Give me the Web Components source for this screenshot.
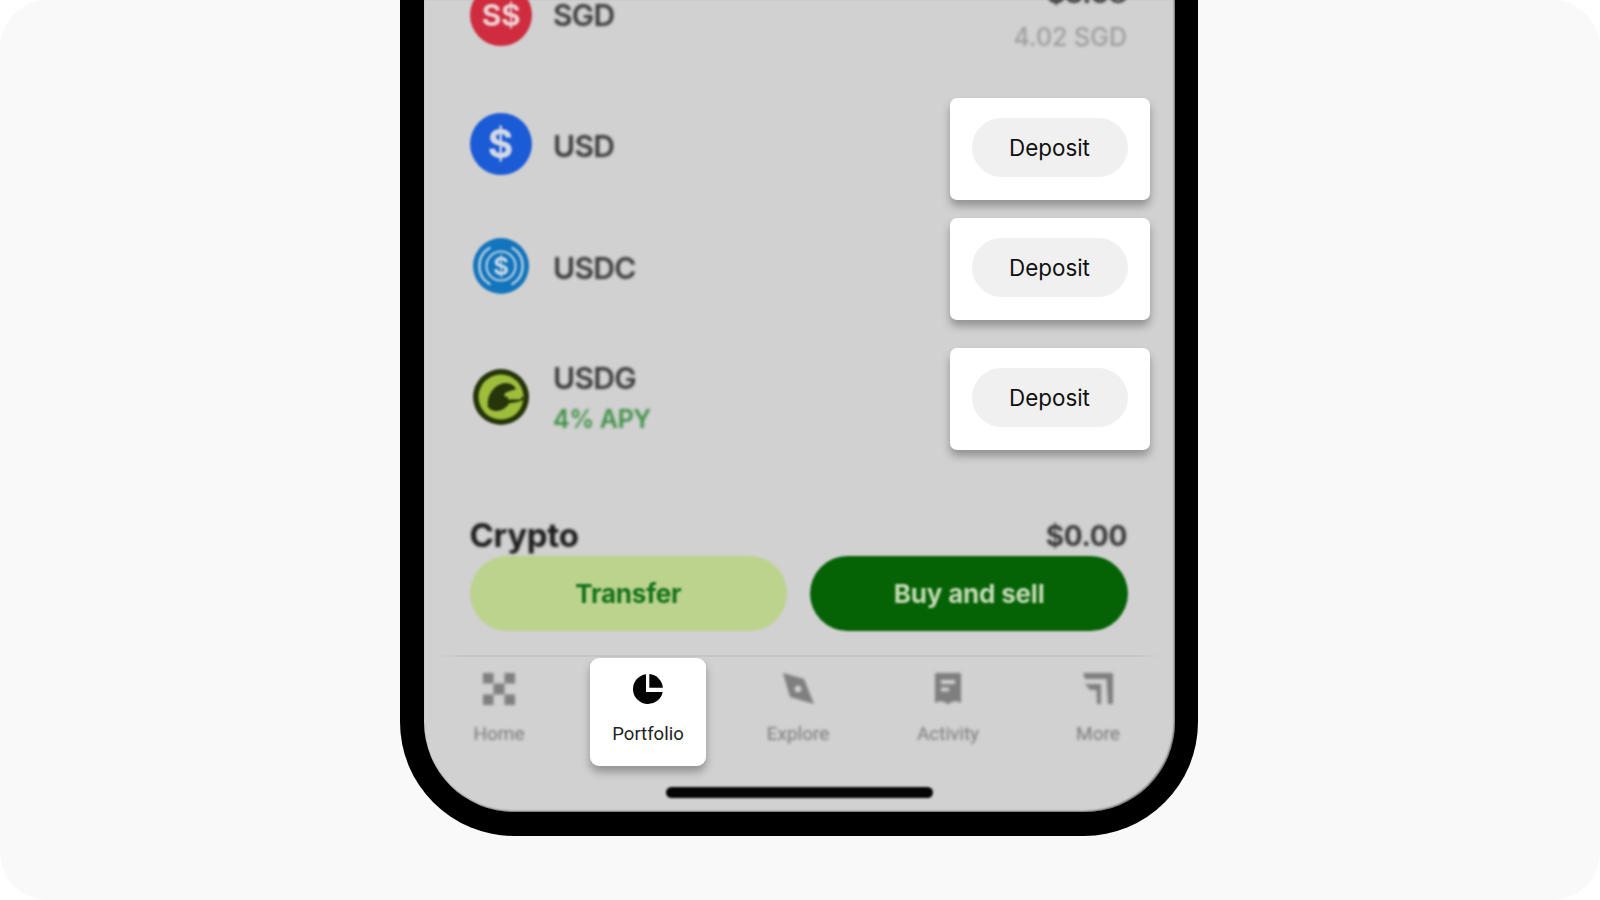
<!DOCTYPE html>
<html><head><meta charset="utf-8">
<style>
html,body{margin:0;padding:0;background:#fff;height:100%;overflow:hidden}
</style></head>
<body>
<demo-page>
  <phone-frame>
    <asset-row name="SGD" value="$3.08" sub="4.02 SGD" icon="sgd"></asset-row>
    <asset-row name="USD" icon="usd" deposit style="--ic:10px;--nm:6px;margin-bottom:18px"></asset-row>
    <asset-row name="USDC" icon="usdc" deposit style="--ic:6px;--nm:3px;margin-bottom:28px"></asset-row>
    <asset-row name="USDG" apy="4% APY" icon="usdg" deposit style="--ic:4px;--nm:2px"></asset-row>
    <section-head label="Crypto" value="$0.00"></section-head>
    <action-bar></action-bar>
    <tab-bar></tab-bar>
  </phone-frame>
</demo-page>
<script>
const BLUR='blur(1.4px)';
function def(name,html){
  customElements.define(name,class extends HTMLElement{
    connectedCallback(){
      if(this.shadowRoot)return;
      const r=this.attachShadow({mode:'open'});
      r.innerHTML=typeof html==='function'?html(this):html;
    }
  });
}
const ICONS={
 sgd:`<svg viewBox="0 0 62 62" width="62" height="62"><circle cx="31" cy="31" r="31" fill="#cf2c3f"/><text x="31" y="42" text-anchor="middle" font-family="Inter,sans-serif" font-weight="700" font-size="30" letter-spacing="-.5" fill="#eccdcf">S$</text></svg>`,
 usd:`<svg viewBox="0 0 62 62" width="62" height="62"><circle cx="31" cy="31" r="31" fill="#1c5bd6"/><text x="30.500" y="45" text-anchor="middle" font-family="Inter,sans-serif" font-weight="700" font-size="39" fill="#d3d9e6">$</text></svg>`,
 usdc:`<svg viewBox="0 0 56 56" width="56" height="56"><circle cx="28" cy="28" r="28" fill="#1375bd"/><g fill="none" stroke="#b4cde0" stroke-width="2.500" stroke-linecap="round"><path d="M16.500 10A21 21 0 0 0 16.500 46"/><path d="M39.500 10A21 21 0 0 1 39.500 46"/></g><text x="28" y="36.500" text-anchor="middle" font-family="Inter,sans-serif" font-weight="700" font-size="24" fill="#c9d9e4">$</text><circle cx="28" cy="28" r="14.500" fill="none" stroke="#b4cde0" stroke-width="2.200"/></svg>`,
 usdg:`<svg viewBox="0 0 56 56" width="56" height="56"><circle cx="28" cy="28" r="28" fill="#26350a"/><circle cx="28" cy="28" r="22.500" fill="#9dbd3b"/><path d="M15 38C13 27 21 15 32 14C37 14 41 16 43 20L34 23C30 25 31 28 34 28H50V31C44 34 41 33 36 34.500C32 42 20 45 15 38Z" fill="#26350a"/><path d="M35 27.500H48V30.500H35Z" fill="#9dbd3b"/></svg>`
};
def('demo-page',`<style>
:host{display:flex;justify-content:center;align-items:flex-end;box-sizing:border-box;width:1600px;height:900px;padding:0 2px 64px 0;background:#f9f9f9;border-radius:48px;overflow:hidden;font-family:Inter,"Liberation Sans",sans-serif}
</style><slot></slot>`);
def('phone-frame',`<style>
:host{display:block;box-sizing:border-box;width:798px;height:836px;padding:0 23px 24px 24px;background:#000;border-radius:0 0 114px 114px}
.screen{height:812px;box-sizing:border-box;background:#d1d1d1;border-radius:0 0 90px 90px;overflow:hidden;display:flex;flex-direction:column;justify-content:flex-end;padding-bottom:14px;box-shadow:inset -1px -1px 2px rgba(0,0,0,.5)}
.bar{width:267px;height:11px;margin:21px auto 0;border-radius:6px;background:#050505;filter:blur(1px);flex:none}
</style><div class="screen"><slot></slot><div class="bar"></div></div>`);
def('asset-row',h=>{
 const n=h.getAttribute('name'),v=h.getAttribute('value'),s=h.getAttribute('sub'),a=h.getAttribute('apy'),ic=h.getAttribute('icon');
 const dep=h.hasAttribute('deposit');
 return `<style>
:host{display:block;flex:none}
.row{display:flex;align-items:center;padding:0 25px 0 45.500px}
.sgd{height:130px;padding-right:48px;margin-bottom:18px}
.dep{height:102px}
.ic{flex:none;display:flex;filter:blur(1.1px);width:62px;justify-content:center;margin-bottom:var(--ic,0)}
.names{flex:1;margin-left:21.500px;margin-bottom:var(--nm,0);filter:${BLUR}}
.n{font-size:30px;font-weight:600;line-height:36px;color:#3a3a3a;letter-spacing:-.7px}
.a{font-size:25px;font-weight:600;line-height:34px;color:#3f9146;margin-top:6px;letter-spacing:-.4px}
.vals{text-align:right;filter:${BLUR}}
.v{font-size:28px;font-weight:700;color:#3a3a3a;line-height:36px;letter-spacing:-.3px}
.s{font-size:25px;font-weight:500;color:#9e9e9e;line-height:36px;margin-top:8px}
.card{flex:none;width:200px;height:102px;box-sizing:border-box;padding-top:20px;background:#fff;border-radius:7px;box-shadow:0 6px 8px rgba(0,0,0,.3)}
.pill{width:156px;height:59px;margin-left:21.500px;border-radius:30px;background:#f0f0f0;display:flex;align-items:center;justify-content:center;font-size:22.400px;font-weight:400;color:#111}
</style><div class="row ${dep?'dep':'sgd'}">
<div class="ic">${ICONS[ic]}</div>
<div class="names"><div class="n">${n}</div>${a?`<div class="a">${a}</div>`:''}</div>
${v?`<div class="vals"><div class="v">${v}</div><div class="s">${s}</div></div>`:''}
${dep?`<div class="card"><div class="pill">Deposit</div></div>`:''}
</div>`;
});
def('section-head',h=>`<style>
:host{display:flex;flex:none;justify-content:space-between;align-items:flex-end;padding:0 48px 0 45.500px;margin-top:48px;height:58px;box-sizing:border-box;filter:${BLUR}}
.l{font-size:33px;font-weight:700;color:#1c1c1c;line-height:42px;letter-spacing:-.3px}
.v{font-size:28px;font-weight:700;color:#3a3a3a;line-height:40px;letter-spacing:-.3px}
</style><div class="l">${h.getAttribute('label')}</div><div class="v">${h.getAttribute('value')}</div>`);
def('action-bar',`<style>
:host{display:flex;flex:none;gap:23px;padding:0 47px 0 45.500px;filter:blur(1.1px)}
.b{flex:1;height:75px;border-radius:38px;display:flex;align-items:center;justify-content:center;font-size:26px;font-weight:700;letter-spacing:-.2px}
.t{background:#bbd38c;color:#15731b}
.s{background:#056306;color:#c4d9b4}
</style><div class="b t">Transfer</div><div class="b s">Buy and sell</div>`);
const TAB={
 home:`<svg viewBox="0 0 32 32" width="32" height="32"><g fill="#7f7f7f"><rect x="0" y="0" width="10.500" height="10.500"/><rect x="21.500" y="0" width="10.500" height="10.500"/><rect x="10.500" y="10.500" width="11" height="11"/><rect x="0" y="21.500" width="10.500" height="10.500"/><rect x="21.500" y="21.500" width="10.500" height="10.500"/></g></svg>`,
 port:`<svg viewBox="0 0 32 32" width="32" height="32"><path d="M14 1.200A15 15 0 1 0 30.700 19H14Z" fill="#050505"/><path d="M17.300 1.100A15 15 0 0 1 30.900 14.700H17.300Z" fill="#050505"/></svg>`,
 expl:`<svg viewBox="0 0 32 32" width="32" height="32"><path fill-rule="evenodd" d="M1 0 22 6 32 31 8 24ZM16 12.500a3.500 3.500 0 1 0 .01 0Z" fill="#7f7f7f"/></svg>`,
 acti:`<svg viewBox="0 0 32 32" width="32" height="32"><path fill-rule="evenodd" d="M3 0H29V30L24 28 19.500 29 16 31.500 12.500 29 8 28 3 30ZM9 7V11H23V7ZM9 14.500V18.500H17V14.500Z" fill="#7f7f7f"/></svg>`,
 more:`<svg viewBox="0 0 32 32" width="32" height="32"><path d="M1 0H31V31H26L24.500 6H3ZM3 11H19V31H15L14.500 17H8Z" fill="#7f7f7f" fill-rule="evenodd"/></svg>`
};
def('tab-bar',`<style>
:host{display:block;flex:none;margin-top:24px}
.line{height:2px;margin:0 12px;background:linear-gradient(90deg,transparent,#c6c6c6 4%,#c6c6c6 96%,transparent)}
.tabs{display:grid;grid-template-columns:repeat(5,150px);margin:1px 0 0 -1px;justify-items:center}
.t{width:116px;height:108px;box-sizing:border-box;padding-top:15px;display:flex;flex-direction:column;align-items:center;font-family:Roboto,sans-serif;font-size:19px;color:#7a7a7a}
.t:first-child{margin-left:2px}
.t svg{display:block}
.t span{display:block;margin-top:17px;line-height:24px}
.blur>*{filter:${BLUR}}
.on{background:#fff;border-radius:9px;box-shadow:0 6px 8px rgba(0,0,0,.3);color:#222;font-size:18.500px}
</style>
<div class="line"></div>
<div class="tabs">
<div class="t blur">${TAB.home}<span>Home</span></div>
<div class="t on">${TAB.port}<span>Portfolio</span></div>
<div class="t blur">${TAB.expl}<span>Explore</span></div>
<div class="t blur">${TAB.acti}<span>Activity</span></div>
<div class="t blur">${TAB.more}<span>More</span></div>
</div>`);
</script>
</body></html>
